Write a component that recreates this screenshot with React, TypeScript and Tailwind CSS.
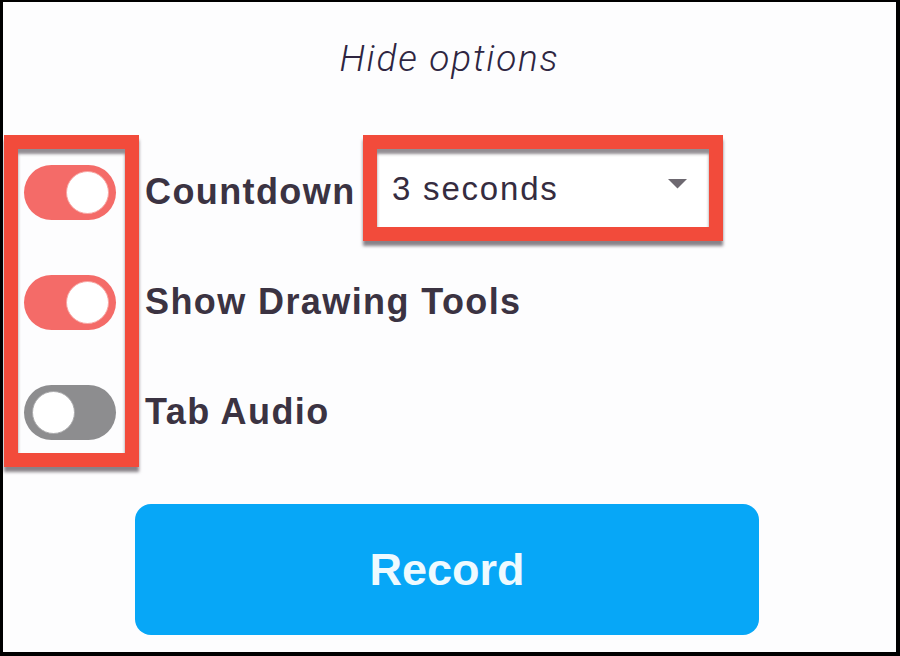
const options = [
  { label: 'Countdown', on: true },
  { label: 'Show Drawing Tools', on: true },
  { label: 'Tab Audio', on: false },
]

function Toggle({ on }: { on: boolean }) {
  return (
    <div
      className={`w-[92px] h-[55px] rounded-full flex items-center ${
        on ? 'bg-[#f46b68] justify-end pr-[7px]' : 'bg-[#8d8d8f] justify-start pl-[8px]'
      }`}
    >
      <div
        className={`size-[43px] rounded-full bg-white border ${
          on ? 'border-[#f7a5a2]' : 'border-[#a9a9ab]'
        }`}
      />
    </div>
  )
}

export default function App() {
  return (
    <div className="w-[900px] h-[656px] bg-black pt-[2px] pl-[3px] pr-[4px] pb-[4px]">
      <div className="w-full h-full bg-[#fdfdfe] flex flex-col font-['Liberation_Sans',Arial,sans-serif]">
        {/* Header */}
        <p className="text-center mt-[39px] h-[36px] leading-[36px] text-[37px] italic font-light tracking-[1.8px] text-[#2e2541] font-['Roboto',sans-serif]">
          Hide options
        </p>

        {/* Options */}
        <div className="flex items-start mt-[58px]">
          <div className="ml-[1px] w-[135px] h-[332px] border-[14px] border-[#f24b3b] shadow-[0_5px_3px_rgba(40,30,40,0.55),inset_0_5px_3px_rgba(40,30,40,0.5)] flex flex-col pl-[6px] pt-[16px] gap-[55px]">
            {options.map((o) => (
              <Toggle key={o.label} on={o.on} />
            ))}
          </div>

          <div className="ml-[6px] pt-[2px] flex flex-col">
            {options.map((o, i) => (
              <div key={o.label} className="h-[110px] flex items-center">
                <span className={`${i === 0 ? 'w-[218px]' : ''} text-[36px] font-bold tracking-[1.4px] text-[#3b3342] whitespace-nowrap`}>
                  {o.label}
                </span>
                {i === 0 && (
                  <div className="self-start -mt-[2px] w-[360px] h-[106px] border-[14px] border-[#f24b3b] bg-white shadow-[0_5px_3px_rgba(40,30,40,0.55),inset_0_5px_3px_rgba(40,30,40,0.5)] flex items-center justify-between pl-[15px] pr-[22px]">
                    <span className="text-[33px] tracking-[1.8px] text-[#352c3f] mt-[2px]">3 seconds</span>
                    <svg width="19" height="10" viewBox="0 0 19 10" className="-mt-[8px]">
                      <path d="M0 0 L19 0 L9.5 9.5 Z" fill="#6d6870" />
                    </svg>
                  </div>
                )}
              </div>
            ))}
          </div>
        </div>

        {/* Record */}
        <button className="ml-[132px] mt-[37px] w-[624px] h-[131px] rounded-[16px] bg-[#07a7f7] text-[#eefaff] text-[45px] font-bold flex items-center justify-center">
          Record
        </button>
      </div>
    </div>
  )
}
